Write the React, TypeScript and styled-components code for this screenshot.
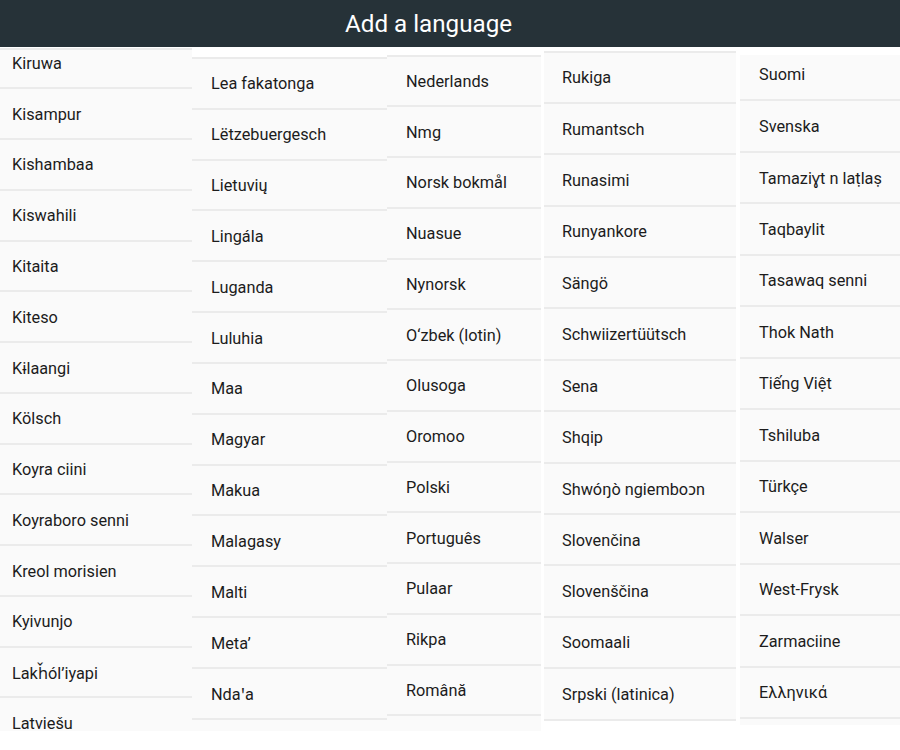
import React from 'react';
import styled, { createGlobalStyle } from 'styled-components';

const GlobalStyle = createGlobalStyle`
  html, body {
    margin: 0;
    padding: 0;
    background: #ffffff;
    font-family: Roboto, "Noto Sans", "DejaVu Sans", sans-serif;
  }
`;

const Page = styled.div`
  width: 900px;
  height: 750px;
  overflow: hidden;
  background: #ffffff;
`;

const Header = styled.header`
  height: 47px;
  background: #263238;
  display: flex;
  align-items: center;
  padding-left: 345px;
  box-sizing: border-box;
`;

const Title = styled.h1`
  margin: 0;
  font-size: 24.2px;
  font-weight: 400;
  color: #ffffff;
`;

const Columns = styled.div`
  display: flex;
  align-items: flex-start;
`;

const Column = styled.div<{ $w: number; $top: number; $bottom: number; $gap: number; $line: boolean }>`
  flex-shrink: 0;
  width: ${(p) => p.$w}px;
  margin-left: ${(p) => p.$gap}px;
  margin-top: ${(p) => p.$top - 47}px;
  height: ${(p) => p.$bottom - p.$top}px;
  box-sizing: border-box;
  overflow: hidden;
  background: #fafafa;
  border-top: ${(p) => (p.$line ? '2px solid #ebebeb' : 'none')};
`;

const ColumnInner = styled.div<{ $shift: number }>`
  margin-top: ${(p) => -p.$shift}px;
`;

const Row = styled.div<{ $h: number; $pad: number }>`
  height: ${(p) => p.$h}px;
  box-sizing: border-box;
  display: flex;
  align-items: center;
  padding-left: ${(p) => p.$pad}px;
  padding-top: 1px;
  border-bottom: 2px solid #ebebeb;
  font-size: 16.3px;
  color: #1c1c1c;
  white-space: nowrap;
`;

type Col = {
  w: number;
  top: number;
  bottom: number;
  gap: number;
  line: boolean;
  shift: number;
  h: number;
  pad: number;
  items: string[];
};

const columns: Col[] = [
  {
    w: 192, top: 48, bottom: 731, gap: 0, line: true, shift: 11.5, h: 50.77, pad: 12,
    items: ['Kiruwa', 'Kisampur', 'Kishambaa', 'Kiswahili', 'Kitaita', 'Kiteso', 'Kɨlaangi', 'Kölsch', 'Koyra ciini', 'Koyraboro senni', 'Kreol morisien', 'Kyivunjo', 'Lakȟól’iyapi', 'Latviešu', ''],
  },
  {
    w: 195, top: 57, bottom: 731, gap: 0, line: true, shift: 0, h: 50.83, pad: 19,
    items: ['Lea fakatonga', 'Lëtzebuergesch', 'Lietuvių', 'Lingála', 'Luganda', 'Luluhia', 'Maa', 'Magyar', 'Makua', 'Malagasy', 'Malti', 'Meta’', 'Ndaꞌa', ''],
  },
  {
    w: 154, top: 54.5, bottom: 731, gap: 0, line: true, shift: 0, h: 50.75, pad: 19,
    items: ['Nederlands', 'Nmg', 'Norsk bokmål', 'Nuasue', 'Nynorsk', 'O‘zbek (lotin)', 'Olusoga', 'Oromoo', 'Polski', 'Português', 'Pulaar', 'Rikpa', 'Română', ''],
  },
  {
    w: 192, top: 50.5, bottom: 721, gap: 3, line: true, shift: 0, h: 51.4, pad: 18,
    items: ['Rukiga', 'Rumantsch', 'Runasimi', 'Runyankore', 'Sängö', 'Schwiizertüütsch', 'Sena', 'Shqip', 'Shwóŋò ngiemboɔn', 'Slovenčina', 'Slovenščina', 'Soomaali', 'Srpski (latinica)', ''],
  },
  {
    w: 160, top: 55, bottom: 725, gap: 4, line: false, shift: 5.5, h: 51.5, pad: 19,
    items: ['Suomi', 'Svenska', 'Tamaziɣt n laṭlaṣ', 'Taqbaylit', 'Tasawaq senni', 'Thok Nath', 'Tiếng Việt', 'Tshiluba', 'Türkçe', 'Walser', 'West-Frysk', 'Zarmaciine', 'Ελληνικά', ''],
  },
];

export default function App() {
  return (
    <Page>
      <GlobalStyle />
      <Header>
        <Title>Add a language</Title>
      </Header>
      <Columns>
        {columns.map((c, i) => (
          <Column key={i} $w={c.w} $top={c.top} $bottom={c.bottom} $gap={c.gap} $line={c.line}>
            <ColumnInner $shift={c.shift}>
              {c.items.map((name, j) => (
                <Row key={j} $h={c.h} $pad={c.pad}>
                  {name}
                </Row>
              ))}
            </ColumnInner>
          </Column>
        ))}
      </Columns>
    </Page>
  );
}
